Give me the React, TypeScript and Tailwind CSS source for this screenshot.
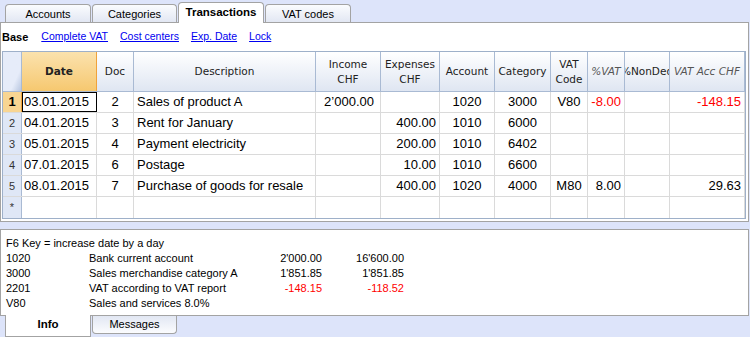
const TOP_TABS = [
  { label: 'Accounts', active: false, w: 'w-[86px]' },
  { label: 'Categories', active: false, w: 'w-[85px]' },
  { label: 'Transactions', active: true, w: 'w-[86px]' },
  { label: 'VAT codes', active: false, w: 'w-[86px]' },
]

const LINKS = ['Complete VAT', 'Cost centers', 'Exp. Date', 'Lock']

// column widths include the 1px right border
const COLS = [
  { w: 'w-[75px]', align: 'justify-start pl-[2px]' },
  { w: 'w-[37px]', align: 'justify-center' },
  { w: 'w-[182px]', align: 'justify-start pl-[3px]' },
  { w: 'w-[65px]', align: 'justify-end pr-[6px]' },
  { w: 'w-[59px]', align: 'justify-end pr-[3px]' },
  { w: 'w-[55px]', align: 'justify-center' },
  { w: 'w-[56px]', align: 'justify-center' },
  { w: 'w-[37px]', align: 'justify-center' },
  { w: 'w-[37px]', align: 'justify-end pr-[3px]' },
  { w: 'w-[45px]', align: 'justify-end pr-[3px]' },
  { w: 'w-[75px]', align: 'justify-end pr-[3px]' },
]

const HEADERS: { lines: string[]; italic?: boolean }[] = [
  { lines: ['Date'] },
  { lines: ['Doc'] },
  { lines: ['Description'] },
  { lines: ['Income', 'CHF'] },
  { lines: ['Expenses', 'CHF'] },
  { lines: ['Account'] },
  { lines: ['Category'] },
  { lines: ['VAT', 'Code'] },
  { lines: ['%VAT'], italic: true },
  { lines: ['%NonDed'] },
  { lines: ['VAT Acc CHF'], italic: true },
]

type Cell = string | { v: string; red: true }
const red = (v: string): Cell => ({ v, red: true })

const ROWS: { n: string; cells: Cell[] }[] = [
  { n: '1', cells: ['03.01.2015', '2', 'Sales of product A', '2\u2019000.00', '', '1020', '3000', 'V80', red('-8.00'), '', red('-148.15')] },
  { n: '2', cells: ['04.01.2015', '3', 'Rent for January', '', '400.00', '1010', '6000', '', '', '', ''] },
  { n: '3', cells: ['05.01.2015', '4', 'Payment electricity', '', '200.00', '1010', '6402', '', '', '', ''] },
  { n: '4', cells: ['07.01.2015', '6', 'Postage', '', '10.00', '1010', '6600', '', '', '', ''] },
  { n: '5', cells: ['08.01.2015', '7', 'Purchase of goods for resale', '', '400.00', '1020', '4000', 'M80', '8.00', '', '29.63'] },
  { n: '*', cells: ['', '', '', '', '', '', '', '', '', '', ''] },
]

const INFO: { code: string; desc: string; a?: Cell; b?: Cell }[] = [
  { code: '1020', desc: 'Bank current account', a: "2'000.00", b: "16'600.00" },
  { code: '3000', desc: 'Sales merchandise category A', a: "1'851.85", b: "1'851.85" },
  { code: '2201', desc: 'VAT according to VAT report', a: red('-148.15'), b: red('-118.52') },
  { code: 'V80', desc: 'Sales and services 8.0%' },
]

function CellText({ c }: { c?: Cell }) {
  if (!c) return null
  if (typeof c === 'string') return <>{c}</>
  return <span className="text-[#ff0000]">{c.v}</span>
}

export default function App() {
  return (
    <div className="w-[750px] h-[337px] overflow-hidden bg-[#dde4fa] flex flex-col font-['Liberation_Sans',Arial,sans-serif] text-black">
      {/* Top tabs */}
      <div className="h-[22px] flex items-end pl-[5px] gap-[1px] shrink-0">
        {TOP_TABS.map((t) =>
          t.active ? (
            <div key={t.label} className={`${t.w} h-[21px] -mb-px z-10 bg-white border border-b-0 border-[#a3a3a3] rounded-t-[4px] flex items-center justify-center text-[11.5px] font-bold`}>
              {t.label}
            </div>
          ) : (
            <div key={t.label} className={`${t.w} h-[18px] bg-linear-to-b from-[#fbfcfe] to-[#e2e7f3] border border-b-0 border-[#a3a3a3] rounded-t-[4px] flex items-center justify-center text-[11px] pt-px`}>
              {t.label}
            </div>
          )
        )}
      </div>

      {/* Main panel */}
      <div className="w-[749px] h-[200px] bg-white border border-[#a3a3a3] shrink-0 flex flex-col">
        <div className="h-[28px] flex items-center pl-[1px] text-[11px] shrink-0">
          <span className="font-bold mr-[13px]">Base</span>
          {LINKS.map((l) => (
            <span key={l} className="text-[#0000f0] underline mr-[12px] text-[10.5px]">{l}</span>
          ))}
        </div>

        {/* Grid */}
        <div className="ml-[1px] w-[744px] border border-[#9eb0c9] flex flex-col">
          {/* Header */}
          <div className="flex h-[40px] border-b border-[#a9bad3] font-['DejaVu_Sans',sans-serif] text-[10.5px] text-[#222]">
            <div className="w-[19px] border-r border-[#a9bad3] bg-linear-to-br from-[#e6ecf9] from-70% to-[#b8c6e0]" />
            {HEADERS.map((h, i) => (
              <div
                key={i}
                className={`${COLS[i].w} shrink-0 overflow-hidden flex flex-col items-center justify-center leading-[15px] whitespace-nowrap ${
                  i === 0
                    ? 'bg-linear-to-b from-[#fbe2ad] to-[#f6c86f] border-r border-[#f0a23a] font-bold'
                    : 'bg-linear-to-b from-white to-[#dfe6f2] border-r border-[#a9bad3]'
                } ${h.italic ? 'italic text-[#555]' : ''}`}
              >
                {h.lines.map((l) => (
                  <span key={l}>{l}</span>
                ))}
              </div>
            ))}
          </div>

          {/* Rows */}
          {ROWS.map((r, ri) => (
            <div key={ri} className="flex h-[21px] border-b border-[#dadada] last:border-b-0 text-[13px]">
              <div
                className={`w-[19px] shrink-0 border-r flex items-center justify-center ${
                  ri === 0
                    ? 'bg-[#f8d592] border-[#f0a23a] font-bold text-[13px]'
                    : 'bg-[#dfe7f6] border-[#a9bad3] text-[11px] text-[#333]'
                }`}
              >
                {r.n}
              </div>
              {r.cells.map((c, ci) => (
                <div
                  key={ci}
                  className={`${COLS[ci].w} shrink-0 overflow-hidden whitespace-nowrap flex items-center border-r border-[#dadada] ${COLS[ci].align} ${
                    ri === 0 && ci === 0 ? 'outline outline-1 outline-black -outline-offset-1' : ''
                  }`}
                >
                  <CellText c={c} />
                </div>
              ))}
            </div>
          ))}
        </div>
      </div>

      {/* Info panel */}
      <div className="mt-[7px] w-[749px] h-[87px] bg-white border border-[#a3a3a3] shrink-0 pt-[6px] pl-[5px] text-[11px] leading-[15px]">
        <div>F6 Key = increase date by a day</div>
        {INFO.map((row) => (
          <div key={row.code} className="flex">
            <span className="w-[83px] shrink-0">{row.code}</span>
            <span className="w-[191px] shrink-0">{row.desc}</span>
            <span className="w-[42px] shrink-0 text-right whitespace-nowrap"><CellText c={row.a} /></span>
            <span className="w-[82px] shrink-0 text-right whitespace-nowrap"><CellText c={row.b} /></span>
          </div>
        ))}
      </div>

      {/* Bottom tabs */}
      <div className="flex pl-[5px] gap-[1px] items-start">
        <div className="w-[86px] h-[22px] -mt-px bg-white border border-t-0 border-[#a3a3a3] flex items-center justify-center text-[11.5px] font-bold pb-[1px]">
          Info
        </div>
        <div className="w-[85px] h-[18px] bg-linear-to-b from-[#e2e7f3] to-[#fbfcfe] border border-t-0 border-[#a3a3a3] rounded-b-[4px] flex items-center justify-center text-[11px]">
          Messages
        </div>
      </div>
    </div>
  )
}
